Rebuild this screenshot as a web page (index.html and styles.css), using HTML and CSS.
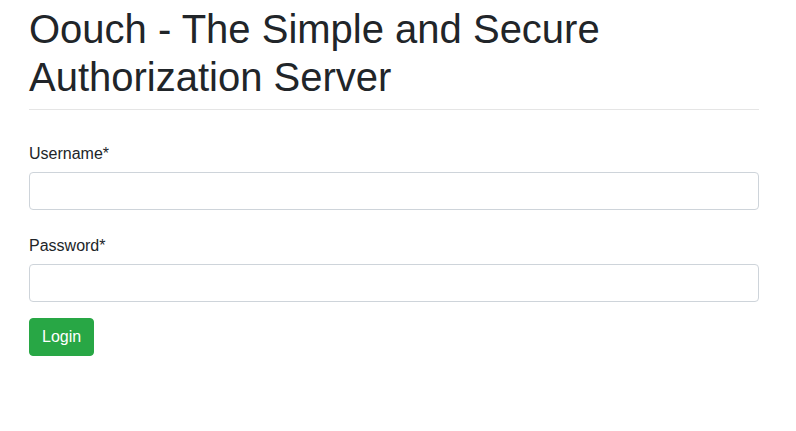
FILE: index.html
```html
<!DOCTYPE html>
<html lang="en">
<head>
    <meta charset="UTF-8">
    <meta name="viewport" content="width=device-width, initial-scale=1.0">
    <title>Oouch - Login</title>
    <link rel="stylesheet" href="styles.css">
</head>
<body>
    <div class="container">
        <h1>Oouch - The Simple and Secure Authorization Server</h1>
        <hr>

        <form class="login-form" method="post">
            <div class="form-group">
                <label for="id_username">Username*</label>
                <input type="text" id="id_username" name="username" class="form-control">
            </div>
            <div class="form-group">
                <label for="id_password">Password*</label>
                <input type="password" id="id_password" name="password" class="form-control">
            </div>
            <button type="submit" class="btn btn-success">Login</button>
        </form>
    </div>
</body>
</html>
```

FILE: styles.css
```css
body {
    margin: 0;
    font-family: "Liberation Sans", Arial, sans-serif;
    font-size: 16px;
    line-height: 1.5;
    color: #212529;
    background-color: #fff;
}
.container {
    padding: 0 37px 0 29px;
}
h1 {
    margin: 5px 0 8px 0;
    font-size: 40px;
    font-weight: 500;
    line-height: 1.2;
}
hr {
    margin: 0;
    border: 0;
    border-top: 1px solid rgba(0, 0, 0, 0.1);
}
.login-form {
    padding-top: 32px;
}
.form-group {
    margin-bottom: 24px;
}
.form-group label {
    display: block;
    margin-bottom: 6px;
}
.form-control {
    display: block;
    width: 100%;
    height: 38px;
    padding: 6px 12px;
    font-family: inherit;
    font-size: 16px;
    color: #495057;
    background-color: #fff;
    border: 1px solid #ced4da;
    border-radius: 4px;
    box-sizing: border-box;
}
.form-group:last-of-type {
    margin-bottom: 16px;
}
.btn {
    display: inline-block;
    padding: 6px 12px;
    font-family: inherit;
    font-size: 16px;
    line-height: 1.5;
    border: 1px solid transparent;
    border-radius: 4px;
    cursor: pointer;
}
.btn-success {
    color: #fff;
    background-color: #28a745;
    border-color: #28a745;
}
```
